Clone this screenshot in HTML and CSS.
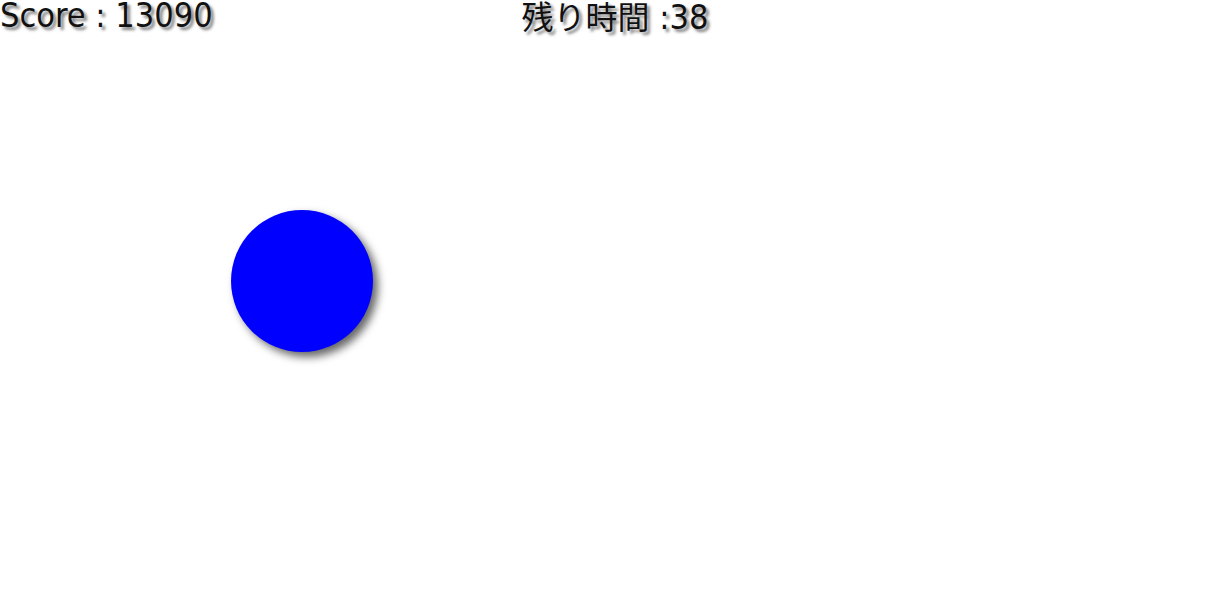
FILE: index.html
```html
<!DOCTYPE html>
<html lang="ja">
<head>
<meta charset="utf-8">
<link rel="stylesheet" href="styles.css">
</head>
<body>
<div class="game">
  <header class="hud">
    <div class="score">Score : 13090</div>
    <div class="time"><span class="jp">残り時間</span> :38</div>
    <div></div>
  </header>
  <div class="ball"></div>
</div>
</body>
</html>
```
FILE: styles.css
```css
html, body {
  margin: 0;
  padding: 0;
  background: #ffffff;
}
.game {
  position: relative;
  width: 1230px;
  height: 597px;
  overflow: hidden;
}
.hud {
  display: grid;
  grid-template-columns: 1fr auto 1fr;
  font-family: "DejaVu Sans Condensed", "DejaVu Sans", "Noto Sans CJK JP", sans-serif;
  font-size: 34px;
  line-height: 30px;
  color: #111111;
  text-shadow: 3px 3px 3px rgba(0,0,0,0.5);
}
.score {
  white-space: nowrap;
}
.time {
  white-space: nowrap;
}
.jp {
  font-family: "Noto Sans CJK JP", sans-serif;
  font-size: 32px;
}
.ball {
  position: absolute;
  left: 231px;
  top: 210px;
  width: 142px;
  height: 142px;
  border-radius: 50%;
  background: #0000ff;
  box-shadow: 5px 5px 8px rgba(0,0,0,0.6);
}
```
